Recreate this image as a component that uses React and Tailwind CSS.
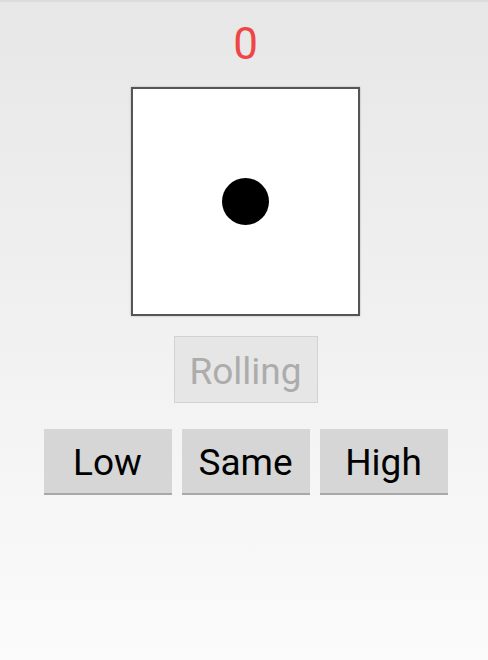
import React from "react"

const font = { fontFamily: "Roboto, 'Noto Sans', sans-serif" }

const GuessButton = ({ label }) => (
  <button className="w-[128px] h-[66px] pt-[3px] bg-[#d6d6d6] border-b-2 border-[#a8a8a8] text-[37px] text-black leading-none">
    {label}
  </button>
)

export default function App() {
  return (
    <div
      className="w-[488px] h-[660px] pl-[3px] bg-gradient-to-b from-[#e7e7e7] to-[#fbfbfb] border-t-2 border-[#dcdcdc] flex flex-col items-center"
      style={font}
    >
      {/* score */}
      <div className="mt-[16px] h-[52px] flex items-center text-[44px] leading-none text-[#ee4545]">
        0
      </div>

      {/* die */}
      <div className="mt-[17px] w-[229px] h-[229px] bg-white border-2 border-[#555555] shadow-[0_0_2px_rgba(0,0,0,0.25)] flex items-center justify-center">
        <div className="w-[47px] h-[47px] rounded-full bg-black" />
      </div>

      {/* roll button */}
      <button
        disabled
        className="mt-[20px] w-[144px] h-[67px] pt-[4px] bg-[#e6e6e6] border border-[#d2d2d2] text-[37px] leading-none text-[#acacac]"
      >
        Rolling
      </button>

      {/* guesses */}
      <div className="mt-[26px] flex gap-[10px]">
        <GuessButton label="Low" />
        <GuessButton label="Same" />
        <GuessButton label="High" />
      </div>
    </div>
  )
}
